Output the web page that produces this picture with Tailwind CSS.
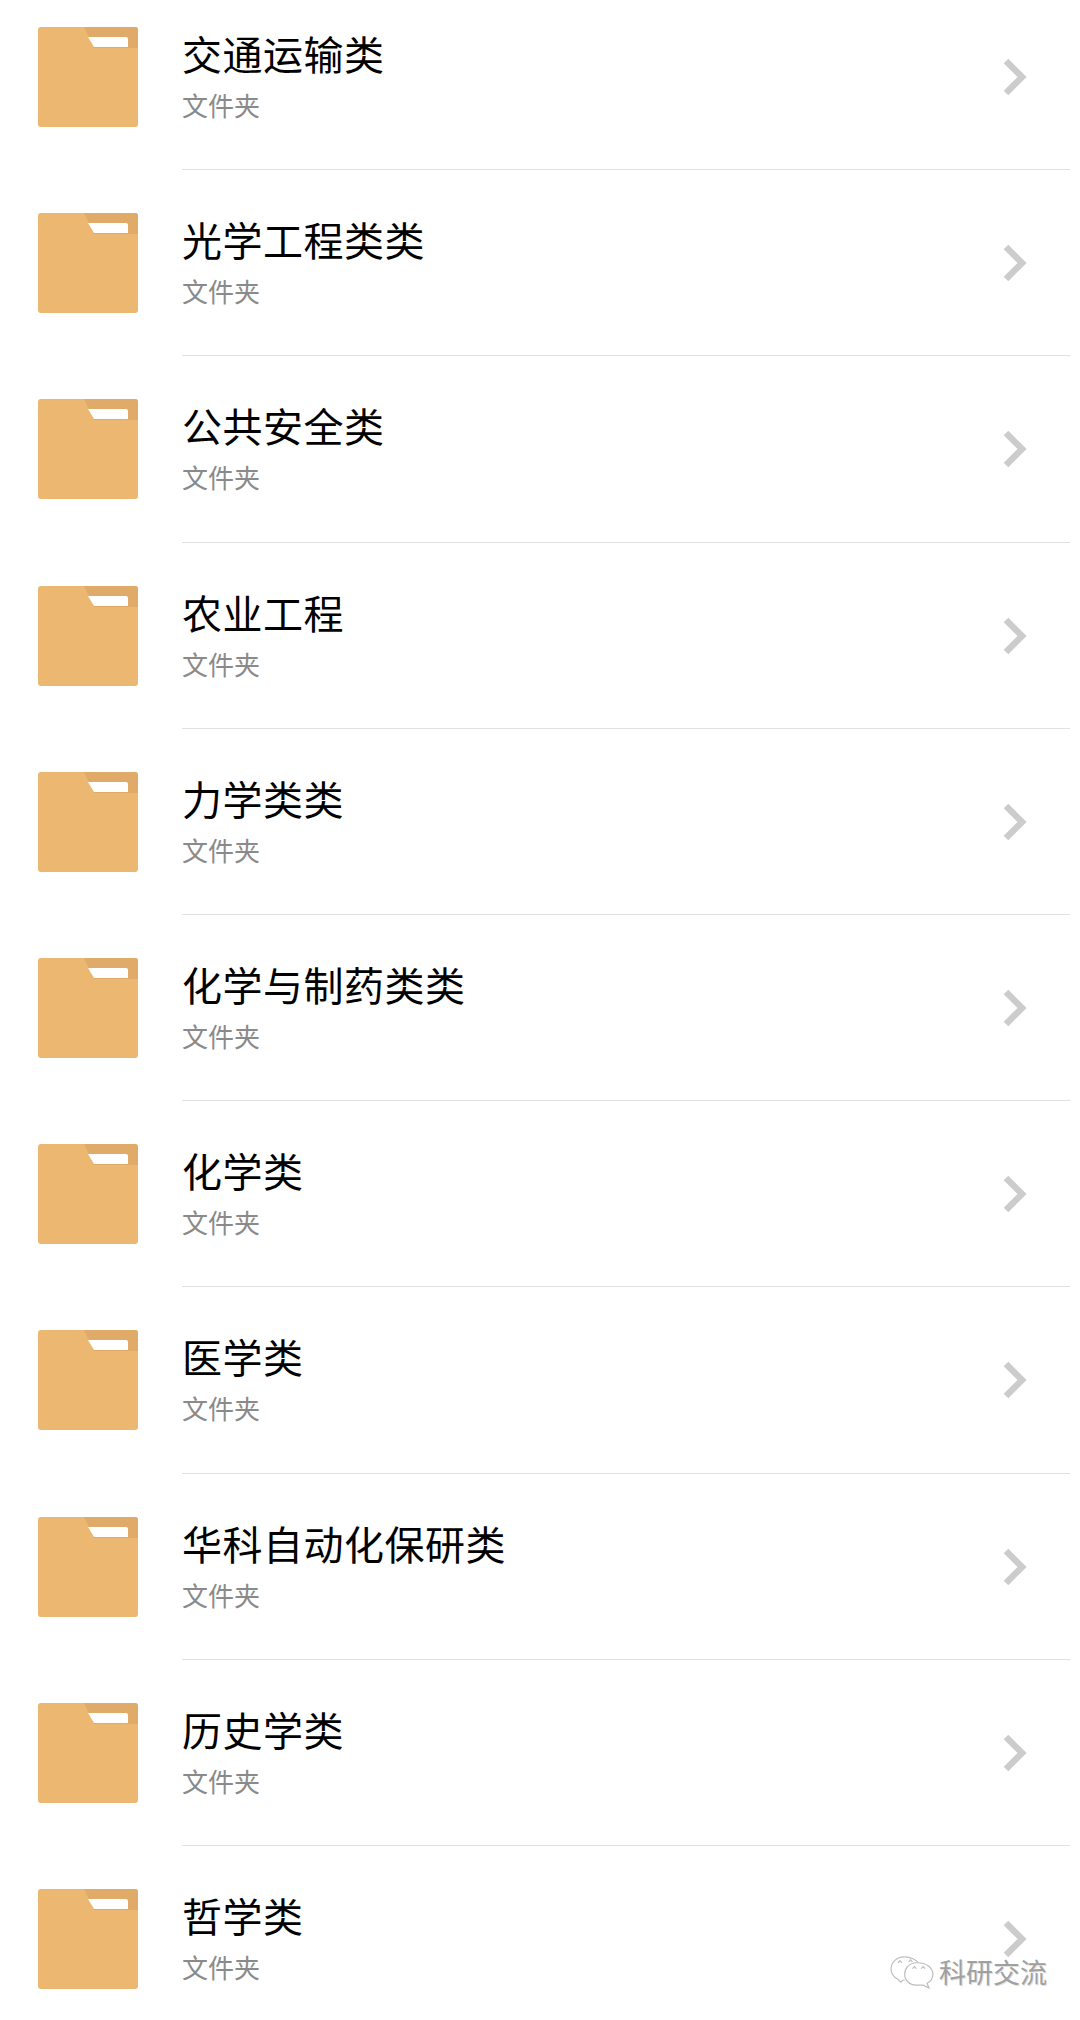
<!DOCTYPE html>
<html lang="zh-CN">
<head>
  <meta charset="UTF-8">
  <meta name="viewport" content="width=device-width, initial-scale=1.0">
  <title>文件夹列表</title>
  <script src="https://cdn.jsdelivr.net/npm/@tailwindcss/browser@4"></script>
</head>
<body class="bg-white font-['Noto_Sans_CJK_SC','Noto_Sans',sans-serif]">

  <!-- Shared icons -->
  <svg class="hidden">
    <symbol id="folder" viewBox="0 0 100 100">
      <path d="M3 0H97a3 3 0 0 1 3 3V97a3 3 0 0 1-3 3H3a3 3 0 0 1-3-3V3a3 3 0 0 1 3-3Z" fill="#ecb871"/>
      <path d="M46 0H97a3 3 0 0 1 3 3V21H56Z" fill="#e0aa68"/>
      <path d="M50 10H88a2 2 0 0 1 2 2V20H56Z" fill="#ffffff"/>
    </symbol>
    <symbol id="chevron" viewBox="0 0 24 38">
      <path d="M3 3 L19 19 L3 35" fill="none" stroke="#cccccc" stroke-width="6.5"/>
    </symbol>
  </svg>

  <div class="relative h-[2020px] w-[1080px] overflow-hidden">
    <main class="-mt-[16px]">

      <div class="flex h-[186.2px] items-start">
        <svg class="ml-[38px] mt-[43px] h-[100px] w-[100px] shrink-0"><use href="#folder"/></svg>
        <div class="ml-[44px] flex h-full grow items-start border-b border-[#e0e0e0] mr-[10px]">
          <div class="grow pt-[40px]">
            <div class="text-[40px] leading-[58px] tracking-[0.5px] text-black">交通运输类</div>
            <div class="mt-[5px] text-[26px] leading-[36px] text-[#8a8a8a]">文件夹</div>
          </div>
          <svg class="mr-[43px] mt-[74px] h-[38px] w-[24px]"><use href="#chevron"/></svg>
        </div>
      </div>

      <div class="flex h-[186.2px] items-start">
        <svg class="ml-[38px] mt-[43px] h-[100px] w-[100px] shrink-0"><use href="#folder"/></svg>
        <div class="ml-[44px] flex h-full grow items-start border-b border-[#e0e0e0] mr-[10px]">
          <div class="grow pt-[40px]">
            <div class="text-[40px] leading-[58px] tracking-[0.5px] text-black">光学工程类类</div>
            <div class="mt-[5px] text-[26px] leading-[36px] text-[#8a8a8a]">文件夹</div>
          </div>
          <svg class="mr-[43px] mt-[74px] h-[38px] w-[24px]"><use href="#chevron"/></svg>
        </div>
      </div>

      <div class="flex h-[186.2px] items-start">
        <svg class="ml-[38px] mt-[43px] h-[100px] w-[100px] shrink-0"><use href="#folder"/></svg>
        <div class="ml-[44px] flex h-full grow items-start border-b border-[#e0e0e0] mr-[10px]">
          <div class="grow pt-[40px]">
            <div class="text-[40px] leading-[58px] tracking-[0.5px] text-black">公共安全类</div>
            <div class="mt-[5px] text-[26px] leading-[36px] text-[#8a8a8a]">文件夹</div>
          </div>
          <svg class="mr-[43px] mt-[74px] h-[38px] w-[24px]"><use href="#chevron"/></svg>
        </div>
      </div>

      <div class="flex h-[186.2px] items-start">
        <svg class="ml-[38px] mt-[43px] h-[100px] w-[100px] shrink-0"><use href="#folder"/></svg>
        <div class="ml-[44px] flex h-full grow items-start border-b border-[#e0e0e0] mr-[10px]">
          <div class="grow pt-[40px]">
            <div class="text-[40px] leading-[58px] tracking-[0.5px] text-black">农业工程</div>
            <div class="mt-[5px] text-[26px] leading-[36px] text-[#8a8a8a]">文件夹</div>
          </div>
          <svg class="mr-[43px] mt-[74px] h-[38px] w-[24px]"><use href="#chevron"/></svg>
        </div>
      </div>

      <div class="flex h-[186.2px] items-start">
        <svg class="ml-[38px] mt-[43px] h-[100px] w-[100px] shrink-0"><use href="#folder"/></svg>
        <div class="ml-[44px] flex h-full grow items-start border-b border-[#e0e0e0] mr-[10px]">
          <div class="grow pt-[40px]">
            <div class="text-[40px] leading-[58px] tracking-[0.5px] text-black">力学类类</div>
            <div class="mt-[5px] text-[26px] leading-[36px] text-[#8a8a8a]">文件夹</div>
          </div>
          <svg class="mr-[43px] mt-[74px] h-[38px] w-[24px]"><use href="#chevron"/></svg>
        </div>
      </div>

      <div class="flex h-[186.2px] items-start">
        <svg class="ml-[38px] mt-[43px] h-[100px] w-[100px] shrink-0"><use href="#folder"/></svg>
        <div class="ml-[44px] flex h-full grow items-start border-b border-[#e0e0e0] mr-[10px]">
          <div class="grow pt-[40px]">
            <div class="text-[40px] leading-[58px] tracking-[0.5px] text-black">化学与制药类类</div>
            <div class="mt-[5px] text-[26px] leading-[36px] text-[#8a8a8a]">文件夹</div>
          </div>
          <svg class="mr-[43px] mt-[74px] h-[38px] w-[24px]"><use href="#chevron"/></svg>
        </div>
      </div>

      <div class="flex h-[186.2px] items-start">
        <svg class="ml-[38px] mt-[43px] h-[100px] w-[100px] shrink-0"><use href="#folder"/></svg>
        <div class="ml-[44px] flex h-full grow items-start border-b border-[#e0e0e0] mr-[10px]">
          <div class="grow pt-[40px]">
            <div class="text-[40px] leading-[58px] tracking-[0.5px] text-black">化学类</div>
            <div class="mt-[5px] text-[26px] leading-[36px] text-[#8a8a8a]">文件夹</div>
          </div>
          <svg class="mr-[43px] mt-[74px] h-[38px] w-[24px]"><use href="#chevron"/></svg>
        </div>
      </div>

      <div class="flex h-[186.2px] items-start">
        <svg class="ml-[38px] mt-[43px] h-[100px] w-[100px] shrink-0"><use href="#folder"/></svg>
        <div class="ml-[44px] flex h-full grow items-start border-b border-[#e0e0e0] mr-[10px]">
          <div class="grow pt-[40px]">
            <div class="text-[40px] leading-[58px] tracking-[0.5px] text-black">医学类</div>
            <div class="mt-[5px] text-[26px] leading-[36px] text-[#8a8a8a]">文件夹</div>
          </div>
          <svg class="mr-[43px] mt-[74px] h-[38px] w-[24px]"><use href="#chevron"/></svg>
        </div>
      </div>

      <div class="flex h-[186.2px] items-start">
        <svg class="ml-[38px] mt-[43px] h-[100px] w-[100px] shrink-0"><use href="#folder"/></svg>
        <div class="ml-[44px] flex h-full grow items-start border-b border-[#e0e0e0] mr-[10px]">
          <div class="grow pt-[40px]">
            <div class="text-[40px] leading-[58px] tracking-[0.5px] text-black">华科自动化保研类</div>
            <div class="mt-[5px] text-[26px] leading-[36px] text-[#8a8a8a]">文件夹</div>
          </div>
          <svg class="mr-[43px] mt-[74px] h-[38px] w-[24px]"><use href="#chevron"/></svg>
        </div>
      </div>

      <div class="flex h-[186.2px] items-start">
        <svg class="ml-[38px] mt-[43px] h-[100px] w-[100px] shrink-0"><use href="#folder"/></svg>
        <div class="ml-[44px] flex h-full grow items-start border-b border-[#e0e0e0] mr-[10px]">
          <div class="grow pt-[40px]">
            <div class="text-[40px] leading-[58px] tracking-[0.5px] text-black">历史学类</div>
            <div class="mt-[5px] text-[26px] leading-[36px] text-[#8a8a8a]">文件夹</div>
          </div>
          <svg class="mr-[43px] mt-[74px] h-[38px] w-[24px]"><use href="#chevron"/></svg>
        </div>
      </div>

      <div class="flex h-[186.2px] items-start">
        <svg class="ml-[38px] mt-[43px] h-[100px] w-[100px] shrink-0"><use href="#folder"/></svg>
        <div class="ml-[44px] flex h-full grow items-start border-b border-[#e0e0e0] mr-[10px]">
          <div class="grow pt-[40px]">
            <div class="text-[40px] leading-[58px] tracking-[0.5px] text-black">哲学类</div>
            <div class="mt-[5px] text-[26px] leading-[36px] text-[#8a8a8a]">文件夹</div>
          </div>
          <svg class="mr-[43px] mt-[74px] h-[38px] w-[24px]"><use href="#chevron"/></svg>
        </div>
      </div>

    </main>

    <!-- Watermark -->
    <div class="absolute left-[889px] top-[1954px] flex items-center">
      <svg class="h-[35px] w-[45px]" viewBox="0 0 46 36" fill="none" stroke="#bdbdbd" stroke-width="1.2">
        <path d="M16 2C7 2 2 8 2 14c0 5 3 9 7 11l3 3 2-2h2"/>
        <path d="M16 2c6 0 12 3 14 6"/>
        <path d="M29 8c-9 0-13 6-13 12s5 11 12 11h7l6 3-2-5c4-2 6-5 6-9 0-7-7-12-16-12Z" fill="#ffffff"/>
        <path d="M9 8l2-2 2 2M20 7l2-2 2 2M24 14l2-2 2 2M33 14l2-2 2 2"/>
      </svg>
      <span class="ml-[5px] text-[27px] leading-[36px] text-[#a0a0a0] [text-shadow:1px_1px_0_#e0e0e0]">科研交流</span>
    </div>
  </div>
</body>
</html>
